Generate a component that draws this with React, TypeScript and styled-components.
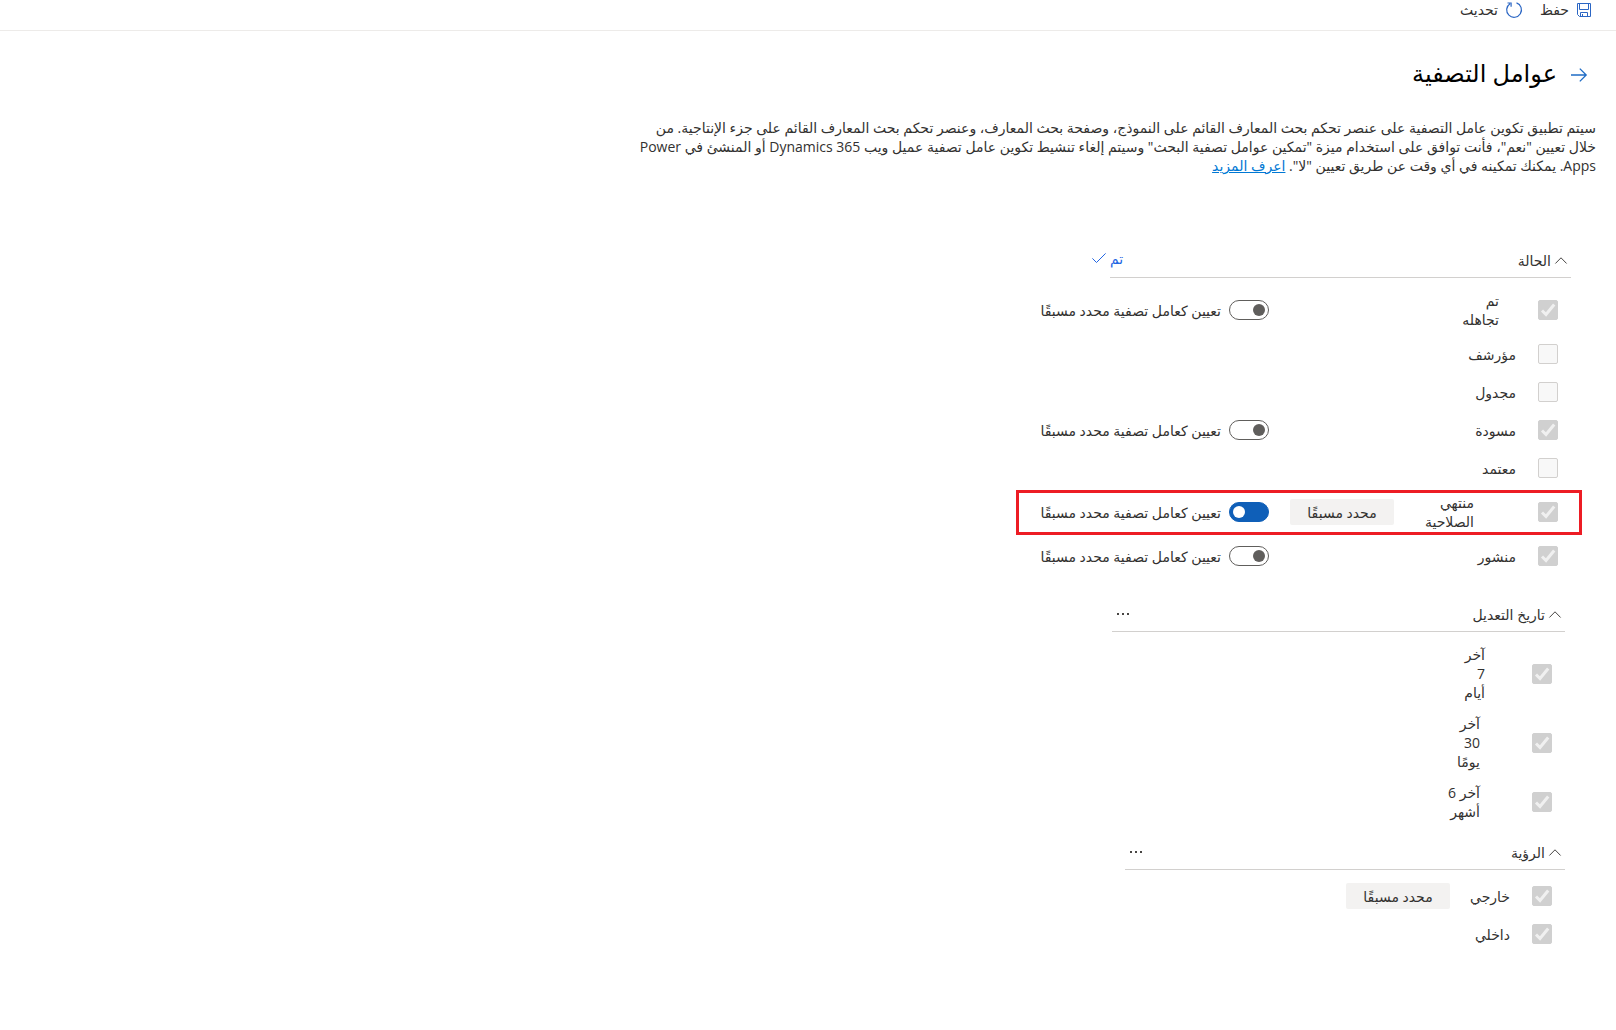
import React, { useState } from "react";
import styled, { createGlobalStyle } from "styled-components";

const GlobalStyle = createGlobalStyle`
  *, *::before, *::after { box-sizing: border-box; }
  body {
    margin: 0;
    background: #fff;
    color: #323130;
    font-family: "Segoe UI", "Open Sans", "Noto Sans", "DejaVu Sans", sans-serif;
    font-size: 14px;
    line-height: 19px;
  }
  button { font: inherit; color: inherit; background: none; border: 0; padding: 0; cursor: pointer; }
  svg { display: block; flex: none; overflow: visible; }
`;

const Page = styled.div`
  min-height: 100vh;
  background: #fff;
`;

const Toolbar = styled.header`
  display: flex;
  align-items: flex-start;
  gap: 18px;
  height: 31px;
  padding: 0 25px;
  border-bottom: 1px solid #edebe9;
`;

const ToolbarButton = styled.button`
  display: flex;
  align-items: center;
  gap: 8px;
  height: 19px;
`;

const TitleBar = styled.div`
  display: flex;
  align-items: center;
  gap: 14px;
  height: 32px;
  margin-top: 28px;
  padding: 0 29px;
`;

const Title = styled.h1`
  margin: 0;
  padding-bottom: 4px;
  color: #000;
  font-size: 24px;
  font-weight: 500;
  line-height: 32px;
`;

const Intro = styled.p`
  width: 60%;
  margin: 27px 20px 0;
  white-space: nowrap;
`;

const Link = styled.a`
  color: #0078d4;
  text-decoration: underline;
`;

const Section = styled.section<{ $top: number; $indent: number }>`
  margin-top: ${(p) => p.$top}px;
  margin-inline-start: ${(p) => p.$indent}px;
`;

const SectionHeader = styled.div<{ $width: number }>`
  display: flex;
  align-items: center;
  justify-content: space-between;
  width: ${(p) => p.$width}px;
  height: 33px;
  padding-bottom: 2px;
  border-bottom: 1px solid #d2d0ce;
`;

const SectionTitle = styled.h2`
  margin: 0;
  font-size: 14px;
  font-weight: 400;
`;

const Collapse = styled.button`
  display: flex;
  align-items: center;
  gap: 4px;
  padding-inline-start: 4px;
`;

const DoneButton = styled.button`
  display: flex;
  align-items: center;
  gap: 4px;
  margin-inline-end: -18px;
  padding-bottom: 4px;
  color: #2266e3;
`;

const MoreButton = styled.button`
  display: flex;
  padding: 0 4px;
`;

const Rows = styled.div`
  padding-top: 7px;
`;

const Row = styled.div<{ $labelWidth: number }>`
  position: relative;
  display: grid;
  grid-template-columns: 20px ${(p) => p.$labelWidth}px 125px max-content;
  align-items: center;
  min-height: 38px;
  width: 555px;
  padding-inline-start: 13px;
`;

const Frame = styled.div`
  position: absolute;
  inset: 3px -11px 2px 0;
  border: 3px solid #ed1c24;
  pointer-events: none;
`;

const CheckCell = styled.span`
  display: grid;
  & > * { grid-area: 1 / 1; }
`;

const CheckInput = styled.input`
  appearance: none;
  width: 20px;
  height: 20px;
  margin: 0;
  border: 1px solid #d2d0ce;
  border-radius: 2px;
  background: #f8f8f8;
  &:checked { background: #d0d0d0; border-color: #d0d0d0; }
`;

const RowLabel = styled.label<{ $indent: number }>`
  padding-block: 6px;
  padding-inline-start: ${(p) => p.$indent}px;
  white-space: pre-line;
`;

const Badge = styled.span`
  justify-self: start;
  width: 104px;
  height: 26px;
  border-radius: 2px;
  background: #f3f2f1;
  line-height: 27px;
  text-align: center;
`;

const ToggleLabel = styled.label`
  display: flex;
  align-items: center;
  gap: 8px;
  grid-column: 4;
  white-space: nowrap;
`;

const ToggleInput = styled.input`
  appearance: none;
  display: flex;
  align-items: center;
  width: 40px;
  height: 20px;
  margin: 0;
  padding: 0 3px;
  border: 1px solid #605e5c;
  border-radius: 10px;
  background: #fff;
  &::before {
    content: "";
    width: 12px;
    height: 12px;
    border-radius: 50%;
    background: #605e5c;
  }
  &:checked {
    justify-content: flex-end;
    border-color: #0f5fb8;
    background: #0f5fb8;
  }
  &:checked::before { background: #fff; }
`;

const SaveIcon = () => (
  <svg width="14" height="14" viewBox="0 0 14 14" fill="none" stroke="#2b66c4">
    <path d="M.5.5h13v13h-11l-2-2zM2.500.5v6h9v-6M3.500 13.500v-4h7v4M5.500 13v-2" />
  </svg>
);

const RefreshIcon = () => (
  <svg width="16" height="16" viewBox="0 0 16 16" fill="none" stroke="#2b66c4" strokeWidth="1.200">
    <path d="M10.500.9A7.400 7.400 0 1 1 4 1.700M1.500 1h3.600v3.800" />
  </svg>
);

const ArrowIcon = () => (
  <svg width="16" height="14" viewBox="0 0 16 14" fill="none" stroke="#1f6cc5" strokeWidth="1.300">
    <path d="M0 7h15M8.800.6 15.200 7l-6.400 6.400" />
  </svg>
);

const ChevronIcon = () => (
  <svg width="12" height="7" viewBox="0 0 12 7" fill="none" stroke="#484644">
    <path d="M.4 6.500 6 .8l5.600 5.700" />
  </svg>
);

const DoneIcon = () => (
  <svg width="14" height="10" viewBox="0 0 14 10" fill="none" stroke="#2266e3">
    <path d="m.4 5.400 4.100 4.100L13.600.4" />
  </svg>
);

const TickIcon = () => (
  <svg width="20" height="20" viewBox="0 0 20 20" fill="none" stroke="#f0f0f0" strokeWidth="3" pointerEvents="none">
    <path d="m4 10.500 4 4 8.200-10" />
  </svg>
);

const DotsIcon = () => (
  <svg width="14" height="4" viewBox="0 0 14 4" fill="#484644">
    <path d="M1 1h2v2H1zM6 1h2v2H6zM11 1h2v2h-2z" />
  </svg>
);

type Item = {
  id: string;
  label: string;
  indent: number;
  checked?: boolean;
  preset?: boolean;
  toggle?: boolean;
  framed?: boolean;
};

const statusItems: Item[] = [
  { id: "ignored", label: "تم\nتجاهله", indent: 39, checked: true, toggle: true },
  { id: "archived", label: "مؤرشف", indent: 22 },
  { id: "scheduled", label: "مجدول", indent: 22 },
  { id: "draft", label: "مسودة", indent: 22, checked: true, toggle: true },
  { id: "approved", label: "معتمد", indent: 22 },
  { id: "expired", label: "منتهي\nالصلاحية", indent: 64, checked: true, preset: true, toggle: true, framed: true },
  { id: "published", label: "منشور", indent: 22, checked: true, toggle: true },
];

const dateItems: Item[] = [
  { id: "days7", label: "آخر\n7\nأيام", indent: 47, checked: true },
  { id: "days30", label: "آخر\n30\nيومًا", indent: 52, checked: true },
  { id: "months6", label: "آخر 6\nأشهر", indent: 52, checked: true },
];

const visibilityItems: Item[] = [
  { id: "external", label: "خارجي", indent: 22, checked: true, preset: true },
  { id: "internal", label: "داخلي", indent: 22, checked: true },
];

function FilterRow({ item, labelWidth }: { item: Item; labelWidth: number }) {
  const [on, setOn] = useState(Boolean(item.preset));
  return (
    <Row $labelWidth={labelWidth}>
      <CheckCell>
        <CheckInput type="checkbox" id={item.id} checked={Boolean(item.checked)} disabled readOnly />
        {item.checked && <TickIcon />}
      </CheckCell>
      <RowLabel htmlFor={item.id} $indent={item.indent}>{item.label}</RowLabel>
      {item.preset && <Badge>محدد مسبقًا</Badge>}
      {item.toggle && (
        <ToggleLabel>
          <ToggleInput type="checkbox" role="switch" checked={on} onChange={() => setOn(!on)} />
          تعيين كعامل تصفية محدد مسبقًا
        </ToggleLabel>
      )}
      {item.framed && <Frame />}
    </Row>
  );
}

type FilterSectionProps = {
  title: string;
  items: Item[];
  top: number;
  indent: number;
  width: number;
  labelWidth: number;
  editing?: boolean;
};

function FilterSection({ title, items, top, indent, width, labelWidth, editing }: FilterSectionProps) {
  const [open, setOpen] = useState(true);
  return (
    <Section $top={top} $indent={indent}>
      <SectionHeader $width={width}>
        <SectionTitle>
          <Collapse type="button" aria-expanded={open} onClick={() => setOpen(!open)}>
            <ChevronIcon />
            {title}
          </Collapse>
        </SectionTitle>
        {editing ? (
          <DoneButton type="button">تم<DoneIcon /></DoneButton>
        ) : (
          <MoreButton type="button" aria-haspopup="menu" aria-label={title}><DotsIcon /></MoreButton>
        )}
      </SectionHeader>
      {open && (
        <Rows>
          {items.map((item) => <FilterRow key={item.id} item={item} labelWidth={labelWidth} />)}
        </Rows>
      )}
    </Section>
  );
}

export default function App() {
  return (
    <Page dir="rtl" lang="ar">
      <GlobalStyle />
      <Toolbar>
        <ToolbarButton type="button"><SaveIcon />حفظ</ToolbarButton>
        <ToolbarButton type="button"><RefreshIcon />تحديث</ToolbarButton>
      </Toolbar>
      <main>
        <TitleBar>
          <button type="button"><ArrowIcon /></button>
          <Title>عوامل التصفية</Title>
        </TitleBar>
        <Intro>
          سيتم تطبيق تكوين عامل التصفية على عنصر تحكم بحث المعارف القائم على النموذج، وصفحة بحث المعارف، وعنصر تحكم بحث المعارف القائم على جزء الإنتاجية. من
          <br />
          خلال تعيين "نعم"، فأنت توافق على استخدام ميزة "تمكين عوامل تصفية البحث" وسيتم إلغاء تنشيط تكوين عامل تصفية عميل ويب Dynamics 365 أو المنشئ في Power
          <br />
          Apps. يمكنك تمكينه في أي وقت عن طريق تعيين "لا". <Link href="#learn-more">اعرف المزيد</Link>
        </Intro>
        <FilterSection title="الحالة" items={statusItems} top={70} indent={45} width={461} labelWidth={144} editing />
        <FilterSection title="تاريخ التعديل" items={dateItems} top={24} indent={51} width={453} labelWidth={144} />
        <FilterSection title="الرؤية" items={visibilityItems} top={10} indent={51} width={440} labelWidth={82} />
      </main>
    </Page>
  );
}
